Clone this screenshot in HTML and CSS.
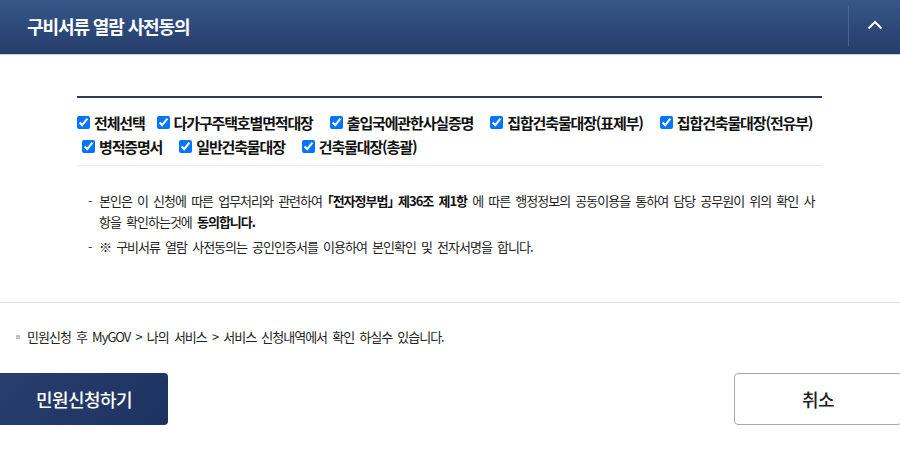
FILE: index.html
```html
<!DOCTYPE html>
<html lang="ko">
<head>
<meta charset="utf-8">
<title>구비서류 열람 사전동의</title>
<link rel="stylesheet" href="styles.css">
</head>
<body>
<header class="panel-head">
  <h2 class="panel-title">구비서류 열람 사전동의</h2>
  <button class="panel-toggle" type="button" aria-label="접기">
    <svg width="16" height="10" viewBox="0 0 16 10"><path d="M1.5 8.5 L8 2 L14.5 8.5" fill="none" stroke="#fff" stroke-width="2"/></svg>
  </button>
</header>

<section class="consent">
  <div class="checks">
    <div class="check-row">
      <label class="chk first"><input type="checkbox" checked><span>전체선택</span></label>
      <label class="chk"><input type="checkbox" checked><span>다가구주택호별면적대장</span></label>
      <label class="chk"><input type="checkbox" checked><span>출입국에관한사실증명</span></label>
      <label class="chk"><input type="checkbox" checked><span>집합건축물대장(표제부)</span></label>
      <label class="chk"><input type="checkbox" checked><span>집합건축물대장(전유부)</span></label>
    </div>
    <div class="check-row second">
      <label class="chk"><input type="checkbox" checked><span>병적증명서</span></label>
      <label class="chk"><input type="checkbox" checked><span>일반건축물대장</span></label>
      <label class="chk"><input type="checkbox" checked><span>건축물대장(총괄)</span></label>
    </div>
  </div>
  <ul class="notes">
    <li>본인은 이 신청에 따른 업무처리와 관련하여 <strong>「전자정부법」 제36조 제1항</strong> 에 따른 행정정보의 공동이용을 통하여 담당 공무원이 위의 확인 사항을 확인하는것에 <strong>동의합니다.</strong></li>
    <li>※ 구비서류 열람 사전동의는 공인인증서를 이용하여 본인확인 및 전자서명을 합니다.</li>
  </ul>
</section>

<div class="info">
  <p class="info-text">민원신청 후 MyGOV &gt; 나의 서비스 &gt; 서비스 신청내역에서 확인 하실수 있습니다.</p>
</div>

<div class="actions">
  <button class="btn btn-primary" type="button">민원신청하기</button>
  <button class="btn btn-cancel" type="button">취소</button>
</div>
</body>
</html>
```

FILE: styles.css
```css
html, body {
  margin: 0;
  padding: 0;
  background: #fff;
  overflow: hidden;
}
body {
  font-family: "Noto Sans CJK KR", "Noto Sans", sans-serif;
  color: #222;
  width: 900px;
}

.panel-head {
  height: 54px;
  display: flex;
  align-items: center;
  justify-content: space-between;
  background: linear-gradient(#36568a, #253d6a);
  border-bottom: 1px solid #c9ced8;
}
.panel-title {
  margin: 0 0 2px 27px;
  font-size: 18px;
  font-weight: 700;
  letter-spacing: -1.1px;
  word-spacing: 0;
  color: #fff;
}
.panel-toggle {
  width: 52px;
  height: 40px;
  margin-bottom: 2px;
  border: 0;
  border-left: 1px solid #4a6493;
  background: transparent;
  display: flex;
  align-items: center;
  justify-content: center;
  padding: 0 0 2px;
}

.consent {
  margin: 41px 78px 0 77px;
  border-top: 2px solid #2b3d64;
}
.checks {
  padding: 12px 0 7px;
  border-bottom: 1px solid #ececec;
}
.check-row {
  display: flex;
  height: 24px;
  align-items: center;
}
.check-row.second {
  padding-left: 5px;
}
.chk {
  display: flex;
  align-items: center;
  margin-left: 17px;
  font-size: 15px;
  font-weight: 700;
  letter-spacing: -1.15px;
  color: #111;
}
.check-row .chk:first-child {
  margin-left: 0;
}
.chk.first + .chk {
  margin-left: 12px;
}
.chk input {
  width: 13px;
  height: 13px;
  margin: 0 4px 0 0;
}

.notes {
  list-style: none;
  margin: 0;
  padding: 24px 6px 0 22px;
  font-size: 13px;
  letter-spacing: -1px;
  word-spacing: 2.5px;
  line-height: 21px;
  color: #222;
  font-feature-settings: "halt";
}
.notes li {
  margin-bottom: 4px;
}
.notes li::before {
  content: "-";
  display: inline-block;
  width: 11px;
  margin-left: -11px;
  color: #444;
}
.notes strong {
  font-weight: 700;
  color: #111;
}

.info {
  margin-top: 45px;
  border-top: 1px solid #dcdcdc;
  padding: 23px 0 0 27px;
}
.info-text {
  margin: 0;
  font-size: 13px;
  line-height: 21px;
  letter-spacing: -1px;
  word-spacing: 2.5px;
  color: #222;
}
.info-text::before {
  content: "";
  display: inline-block;
  width: 4px;
  height: 4px;
  background: #c4c4c4;
  margin: 0 7px 3px -11px;
  vertical-align: middle;
}

.actions {
  display: flex;
  justify-content: space-between;
  margin: 26px -2px 0 0;
}
.btn {
  width: 168px;
  height: 52px;
  border-radius: 4px;
  font-family: inherit;
  font-size: 18px;
  letter-spacing: -0.6px;
  cursor: pointer;
}
.btn-primary {
  border: 0;
  color: #fff;
  font-weight: 500;
  background: linear-gradient(135deg, #283f6e, #1c3260);
  border-radius: 0 4px 4px 0;
}
.btn-cancel {
  border: 1px solid #a8a8a8;
  background: #fff;
  color: #222;
  font-weight: 500;
}
```
